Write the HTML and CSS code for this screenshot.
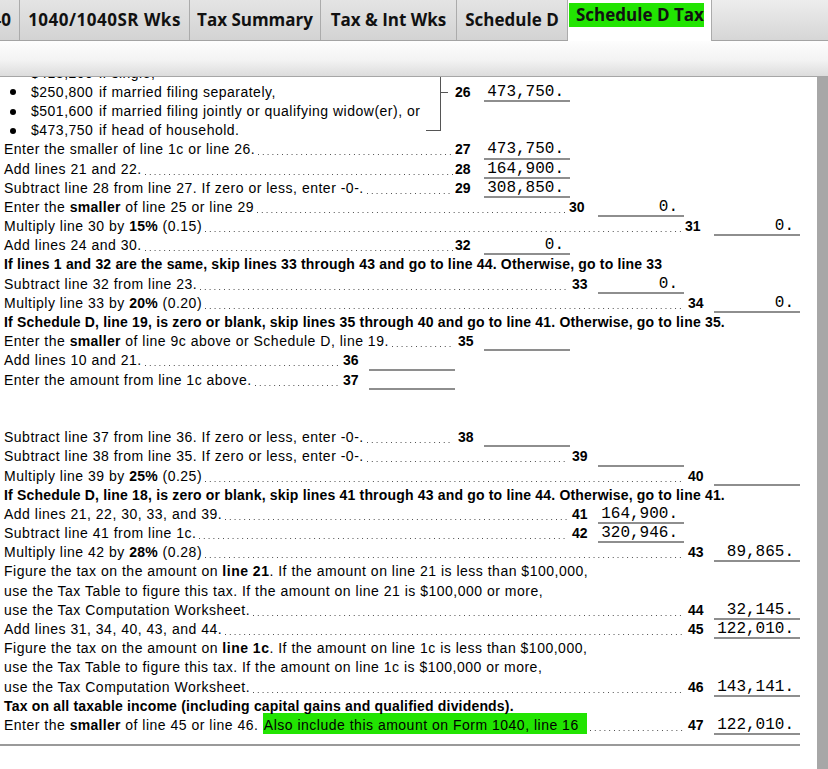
FILE: index.html
```html
<!DOCTYPE html>
<html lang="en">
<head>
<meta charset="utf-8">
<title>Schedule D Tax Worksheet</title>
<link rel="stylesheet" href="styles.css">
</head>
<body>
<div class="app">
  <nav class="tabs">
    <div class="tab tab-clipped"><span>Form 1040</span></div>
    <div class="tab tab-wks">1040/1040SR Wks</div>
    <div class="tab tab-sum">Tax Summary</div>
    <div class="tab tab-int">Tax &amp; Int Wks</div>
    <div class="tab tab-schd">Schedule D</div>
    <div class="tab tab-active"><span class="hl">Schedule D Tax</span></div>
    <div class="tabs-rest"></div>
  </nav>
  <div class="toolbar"></div>
  <main class="view">
    <div class="sheet">
      <div class="form">
        <!-- line 26: threshold by filing status -->
        <div class="brace-group">
          <div class="bullets">
            <div class="brow"><span class="blt"></span><span class="thr">$413,200</span>if single,</div>
            <div class="brow"><span class="blt"></span><span class="thr">$250,800</span>if married filing separately,</div>
            <div class="brow"><span class="blt"></span><span class="thr">$501,600</span>if married filing jointly or qualifying widow(er), or</div>
            <div class="brow"><span class="blt"></span><span class="thr">$473,750</span>if head of household.</div>
          </div>
          <div class="brace"></div>
          <div class="brace-out">
            <div class="blank"></div>
            <div class="ln"><span class="tick"></span><b class="no tight">26</b><span class="amt">473,750.</span></div>
          </div>
        </div>

        <div class="ln a"><span class="txt">Enter the smaller of line 1c or line 26.</span><span class="dots"></span><b class="no tight">27</b><span class="amt">473,750.</span></div>
        <div class="ln a"><span class="txt">Add lines 21 and 22.</span><span class="dots"></span><b class="no tight">28</b><span class="amt">164,900.</span></div>
        <div class="ln a"><span class="txt">Subtract line 28 from line 27. If zero or less, enter -0-.</span><span class="dots"></span><b class="no tight">29</b><span class="amt">308,850.</span></div>
        <div class="ln b"><span class="txt">Enter the <b>smaller</b> of line 25 or line 29 </span><span class="dots"></span><b class="no tight">30</b><span class="amt">0.</span></div>
        <div class="ln c"><span class="txt">Multiply line 30 by <b>15%</b> (0.15)</span><span class="dots"></span><b class="no tight">31</b><span class="amt">0.</span></div>
        <div class="ln a"><span class="txt">Add lines 24 and 30.</span><span class="dots"></span><b class="no tight">32</b><span class="amt">0.</span></div>
        <div class="ln note">If lines 1 and 32 are the same, skip lines 33 through 43 and go to line 44. Otherwise, go to line 33</div>
        <div class="ln b"><span class="txt">Subtract line 32 from line 23.</span><span class="dots"></span><b class="no">33</b><span class="amt">0.</span></div>
        <div class="ln c"><span class="txt">Multiply line 33 by <b>20%</b> (0.20)</span><span class="dots"></span><b class="no">34</b><span class="amt">0.</span></div>
        <div class="ln note">If Schedule D, line 19, is zero or blank, skip lines 35 through 40 and go to line 41. Otherwise, go to line 35.</div>
        <div class="ln a"><span class="txt">Enter the <b>smaller</b> of line 9c above or Schedule D, line 19.</span><span class="dots"></span><b class="no">35</b><span class="amt"></span></div>
        <div class="ln d"><span class="txt">Add lines 10 and 21.</span><span class="dots"></span><b class="no">36</b><span class="amt"></span></div>
        <div class="ln d"><span class="txt">Enter the amount from line 1c above.</span><span class="dots"></span><b class="no">37</b><span class="amt"></span></div>
        <div class="ln"></div>
        <div class="ln"></div>
        <div class="ln a"><span class="txt">Subtract line 37 from line 36. If zero or less, enter -0-.</span><span class="dots"></span><b class="no">38</b><span class="amt"></span></div>
        <div class="ln b"><span class="txt">Subtract line 38 from line 35. If zero or less, enter -0-.</span><span class="dots"></span><b class="no">39</b><span class="amt"></span></div>
        <div class="ln c"><span class="txt">Multiply line 39 by <b>25%</b> (0.25)</span><span class="dots"></span><b class="no">40</b><span class="amt"></span></div>
        <div class="ln note">If Schedule D, line 18, is zero or blank, skip lines 41 through 43 and go to line 44. Otherwise, go to line 41.</div>
        <div class="ln b"><span class="txt">Add lines 21, 22, 30, 33, and 39.</span><span class="dots"></span><b class="no">41</b><span class="amt">164,900.</span></div>
        <div class="ln b"><span class="txt">Subtract line 41 from line 1c.</span><span class="dots"></span><b class="no">42</b><span class="amt">320,946.</span></div>
        <div class="ln c"><span class="txt">Multiply line 42 by <b>28%</b> (0.28)</span><span class="dots"></span><b class="no">43</b><span class="amt">89,865.</span></div>
        <div class="ln">Figure the tax on the amount on&nbsp;<b>line 21</b>. If the amount on line 21 is less than $100,000,</div>
        <div class="ln">use the Tax Table to figure this tax. If the amount on line 21 is $100,000 or more,</div>
        <div class="ln c"><span class="txt">use the Tax Computation Worksheet.</span><span class="dots"></span><b class="no">44</b><span class="amt">32,145.</span></div>
        <div class="ln c"><span class="txt">Add lines 31, 34, 40, 43, and 44.</span><span class="dots"></span><b class="no">45</b><span class="amt">122,010.</span></div>
        <div class="ln">Figure the tax on the amount on&nbsp;<b>line 1c</b>. If the amount on line 1c is less than $100,000,</div>
        <div class="ln">use the Tax Table to figure this tax. If the amount on line 1c is $100,000 or more,</div>
        <div class="ln c"><span class="txt">use the Tax Computation Worksheet.</span><span class="dots"></span><b class="no">46</b><span class="amt">143,141.</span></div>
        <div class="ln note over">Tax on all taxable income (including capital gains and qualified dividends).</div>
        <div class="ln c"><span class="txt">Enter the <b>smaller</b> of line 45 or line 46. <span class="hl hl-line">Also include this amount on Form 1040, line 16</span></span><span class="dots"></span><b class="no">47</b><span class="amt">122,010.</span></div>
      </div>
      <div class="rule"></div>
    </div>
    <div class="scrollbar"></div>
  </main>
</div>
</body>
</html>
```

FILE: styles.css
```css
* { box-sizing: border-box; }

html, body {
  margin: 0;
  padding: 0;
  background: #ffffff;
}

.app {
  width: 828px;
  height: 769px;
  display: flex;
  flex-direction: column;
  overflow: hidden;
}

/* ---------- tab strip ---------- */
.tabs {
  display: flex;
  height: 41px;
  flex: none;
  border-bottom: 1px solid #a3a3a3;
  background: linear-gradient(#ececec, #d5d5d5);
  font-family: "Open Sans", "Noto Sans", sans-serif;
  font-weight: 700;
  font-size: 17px;
  color: #111;
}

.tab {
  display: flex;
  align-items: center;
  justify-content: center;
  flex: none;
  padding: 0 0 1px;
  white-space: nowrap;
  border-right: 1px solid #ababab;
  background: linear-gradient(#e4e4e4, #d3d3d3);
}

.tab-clipped {
  width: 20px;
  padding: 0 8px 1px 0;
  justify-content: flex-end;
  overflow: hidden;
}

.tab-wks { width: 170px; letter-spacing: 0.5px; }
.tab-sum { width: 131px; }
.tab-int { width: 136px; }
.tab-schd { width: 111px; }

.tab-active {
  width: 144px;
  background: #ffffff;
  height: 41px;
  margin-bottom: -1px;
  padding: 0;
  align-items: flex-start;
  justify-content: flex-start;
}

.tab-active .hl {
  margin-top: 3px;
  margin-left: 1px;
  padding: 0 0 0 7px;
  line-height: 24px;
}

.tabs-rest {
  flex: 1;
  background: linear-gradient(#ededed, #d6d6d6);
}

.hl {
  background: #22e402;
}

/* ---------- toolbar ---------- */
.toolbar {
  height: 36px;
  flex: none;
  border-bottom: 1px solid #a6a6a6;
  background: linear-gradient(#fdfdfd 0%, #f3f3f3 55%, #dcdcdc 100%);
}

/* ---------- worksheet view ---------- */
.view {
  flex: 1;
  display: flex;
  min-height: 0;
}

.sheet {
  flex: 1;
  overflow: hidden;
  background: #fff;
}

.scrollbar {
  width: 11px;
  flex: none;
  background: #a7a7a7;
}

.form {
  margin-top: -13.4px;
  padding-left: 4px;
  font-family: "Liberation Sans", Arial, sans-serif;
  font-size: 14px;
  letter-spacing: 0.5px;
  color: #000;
}

.ln {
  display: flex;
  height: 19.2px;
  line-height: 19.2px;
  white-space: nowrap;
}

.ln.a { width: 566px; }
.ln.b { width: 680px; }
.ln.c { width: 796px; }
.ln.d { width: 451px; }

.note { font-weight: 700; letter-spacing: 0.18px; }
.over { position: relative; }

.txt b { letter-spacing: 0.3px; }

.txt { flex: none; }

.dots {
  flex: 1;
  min-width: 0;
  margin: 0 2px 0 3px;
  background-image: linear-gradient(to right, #4a4a4a 1px, transparent 1px);
  background-size: 4.8px 1px;
  background-repeat: repeat-x;
  background-position: 0 14px;
}

.no {
  width: 29px;
  flex: none;
  padding-left: 3px;
  font-weight: 700;
  letter-spacing: 0;
}

.no.tight { padding-left: 0; }

.amt {
  width: 86px;
  flex: none;
  height: 19.2px;
  padding-right: 6px;
  text-align: right;
  letter-spacing: 0;
  border-bottom: 2px solid #8e8e8e;
  font-family: "Liberation Mono", "Courier New", monospace;
  font-size: 16px;
}

.hl-line {
  padding: 4px 8px 1px 1px;
}

/* bullets and brace for line 26 */
.brace-group {
  display: flex;
  width: 566px;
}

.bullets {
  width: 422px;
  flex: none;
}

.brow {
  display: flex;
  align-items: center;
  height: 19.2px;
  line-height: 19.2px;
  white-space: nowrap;
}

.blt {
  width: 27px;
  flex: none;
  display: flex;
  align-items: center;
  padding-left: 6px;
}

.blt::before {
  content: "";
  width: 6px;
  height: 6px;
  border-radius: 50%;
  background: #000;
}

.thr {
  width: 68px;
  flex: none;
}

.brace {
  width: 15px;
  flex: none;
  margin-top: 9.6px;
  height: 57.6px;
  border-top: 1px solid #555;
  border-right: 1px solid #555;
  border-bottom: 1px solid #555;
}

.brace-out {
  flex: 1;
}

.blank { height: 19.2px; }

.tick {
  flex: 1;
  display: flex;
  align-items: center;
}

.tick::before {
  content: "";
  width: 7px;
  border-top: 1px solid #555;
}

.rule {
  width: 800px;
  margin-top: 9px;
  border-top: 2px solid #9a9a9a;
}
```
